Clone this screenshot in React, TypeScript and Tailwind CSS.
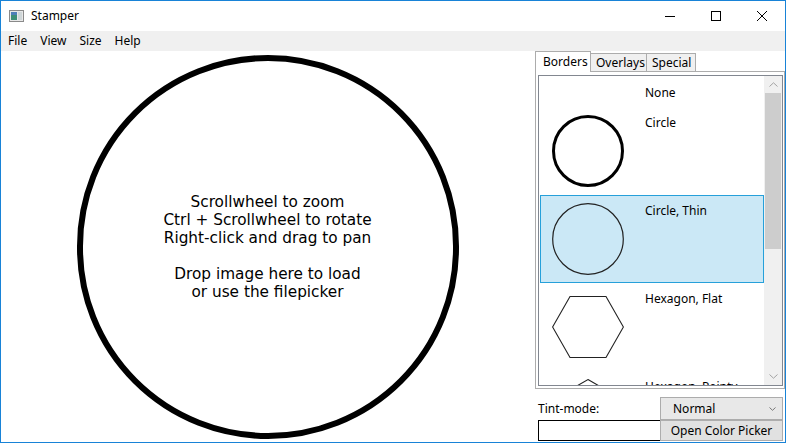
import React from "react";

type Shape = "none" | "circle" | "thin" | "hexflat" | "hexpointy";

const borders: { name: string; shape: Shape; selected?: boolean }[] = [
  { name: "None", shape: "none" },
  { name: "Circle", shape: "circle" },
  { name: "Circle, Thin", shape: "thin", selected: true },
  { name: "Hexagon, Flat", shape: "hexflat" },
  { name: "Hexagon, Pointy", shape: "hexpointy" },
];

function ShapeIcon({ shape }: { shape: Shape }) {
  if (shape === "none") return <div className="w-[72px] h-0" />;
  return (
    <svg width="72" height="72" viewBox="0 0 72 72" className="shrink-0">
      {shape === "circle" && <circle cx="36" cy="36" r="34.5" fill="none" stroke="#000" strokeWidth="3" />}
      {shape === "thin" && <circle cx="36" cy="36" r="35.3" fill="none" stroke="#222" strokeWidth="1.2" />}
      {shape === "hexflat" && (
        <polygon points="0.6,36 18,5.5 54,5.5 71.4,36 54,66.5 18,66.5" fill="none" stroke="#222" strokeWidth="1.1" />
      )}
      {shape === "hexpointy" && (
        <polygon points="36,0.6 66.5,18 66.5,54 36,71.4 5.5,54 5.5,18" fill="none" stroke="#222" strokeWidth="1.1" />
      )}
    </svg>
  );
}

function Chevron({ up = false }: { up?: boolean }) {
  return (
    <svg width="9" height="5" viewBox="0 0 9 5">
      <polyline
        points={up ? "0.5,4.5 4.5,0.8 8.5,4.5" : "0.5,0.5 4.5,4.2 8.5,0.5"}
        fill="none"
        stroke="#a3a3a3"
        strokeWidth="1"
      />
    </svg>
  );
}

export default function App() {
  const ui = { fontFamily: '"Segoe UI", "Noto Sans", sans-serif' };

  return (
    <div
      className="w-[786px] h-[443px] border border-[#1883d7] bg-white flex flex-col overflow-hidden text-black"
      style={ui}
    >
      {/* title bar */}
      <div className="h-[30px] flex items-center shrink-0">
        <svg width="15" height="12" viewBox="0 0 15 12" className="ml-[8px]">
          <rect x="0.5" y="0.5" width="14" height="11" fill="#e8e8e8" stroke="#8a8a8a" />
          <rect x="2" y="2" width="6" height="8" fill="#3e8e76" />
          <rect x="2" y="2" width="6" height="3" fill="#4f7fb8" />
          <rect x="9" y="2" width="4" height="8" fill="#cfd6d8" />
        </svg>
        <span className="ml-[7px] text-[12px]">Stamper</span>
        <div className="ml-auto flex h-full">
          <div className="w-[46px] h-full flex items-center justify-center">
            <div className="w-[10px] h-px bg-black" />
          </div>
          <div className="w-[46px] h-full flex items-center justify-center">
            <div className="w-[10px] h-[10px] border border-black" />
          </div>
          <div className="w-[46px] h-full flex items-center justify-center">
            <svg width="10" height="10" viewBox="0 0 10 10">
              <path d="M0 0L10 10M10 0L0 10" stroke="#000" strokeWidth="1" />
            </svg>
          </div>
        </div>
      </div>

      {/* menu bar */}
      <div className="h-[20px] bg-[#f0f0f0] flex items-center text-[12px] pl-[7px] gap-[13px] shrink-0">
        <span>File</span>
        <span>View</span>
        <span>Size</span>
        <span>Help</span>
      </div>

      <div className="flex flex-1 min-h-0">
        {/* canvas */}
        <div className="w-[533px] flex items-center justify-center">
          <div
            className="w-[382px] h-[384px] rounded-full border-[6px] border-black flex items-center justify-center text-center text-[15.3px] leading-[18px]"
            style={{ fontFamily: '"DejaVu Sans", sans-serif' }}
          >
            <div>
              Scrollwheel to zoom
              <br />
              Ctrl + Scrollwheel to rotate
              <br />
              Right-click and drag to pan
              <br />
              <br />
              Drop image here to load
              <br />
              or use the filepicker
            </div>
          </div>
        </div>

        {/* side panel */}
        <div className="w-[251px] flex flex-col text-[12px] pl-[1px]">
          <div className="flex items-end h-[21px] relative z-10">
            <div className="w-[56px] h-[21px] border border-b-0 border-[#acacac] bg-white pl-[7px] leading-[19px]">
              Borders
            </div>
            <div className="w-[56px] h-[19px] border border-l-0 border-[#acacac] bg-[#f0f0f0] pl-[5px] leading-[17px]">
              Overlays
            </div>
            <div className="w-[49px] h-[19px] border border-l-0 border-[#acacac] bg-[#f0f0f0] pl-[5px] leading-[17px]">
              Special
            </div>
          </div>

          <div className="-mt-px h-[318px] border border-[#acacac] pt-[3px] pl-[2px] pr-[1px] pb-[2px]">
            <div className="h-[311px] border border-[#828790] flex">
              <div className="flex-1 overflow-hidden pl-px pt-px">
                {borders.map((b) => (
                  <div
                    key={b.name}
                    className={`flex pt-[7px] border ${b.shape === "none" ? "h-[30px]" : "h-[88px]"} ${
                      b.selected ? "bg-[#cbe8f6] border-[#26a0da]" : "border-transparent"
                    }`}
                  >
                    <div className="ml-[11px]">
                      <ShapeIcon shape={b.shape} />
                    </div>
                    <div className="ml-[21px] leading-[16px]">{b.name}</div>
                  </div>
                ))}
              </div>
              <div className="w-[18px] bg-[#f0f0f0] flex flex-col">
                <div className="h-[17px] flex items-center justify-center">
                  <Chevron up />
                </div>
                <div className="h-[156px] bg-[#cdcdcd] mx-px" />
                <div className="flex-1" />
                <div className="h-[17px] flex items-center justify-center">
                  <Chevron />
                </div>
              </div>
            </div>
          </div>

          <div className="pl-[3px] pt-[8px] grid grid-cols-[122px_123px]">
            <div className="h-[23px] flex items-center">Tint-mode:</div>
            <div className="h-[23px] border border-[#acacac] bg-[#e8e8e8] flex items-center pl-[12px] pr-[6px]">
              <span>Normal</span>
              <span className="ml-auto">
                <svg width="7" height="4" viewBox="0 0 7 4">
                  <polyline points="0.5,0.5 3.5,3.3 6.5,0.5" fill="none" stroke="#777" strokeWidth="1" />
                </svg>
              </span>
            </div>
            <div className="h-[21px] border border-black bg-white -mr-px" />
            <div className="h-[21px] border border-[#adadad] bg-[#e1e1e1] flex items-center justify-center">
              Open Color Picker
            </div>
          </div>
        </div>
      </div>
    </div>
  );
}
